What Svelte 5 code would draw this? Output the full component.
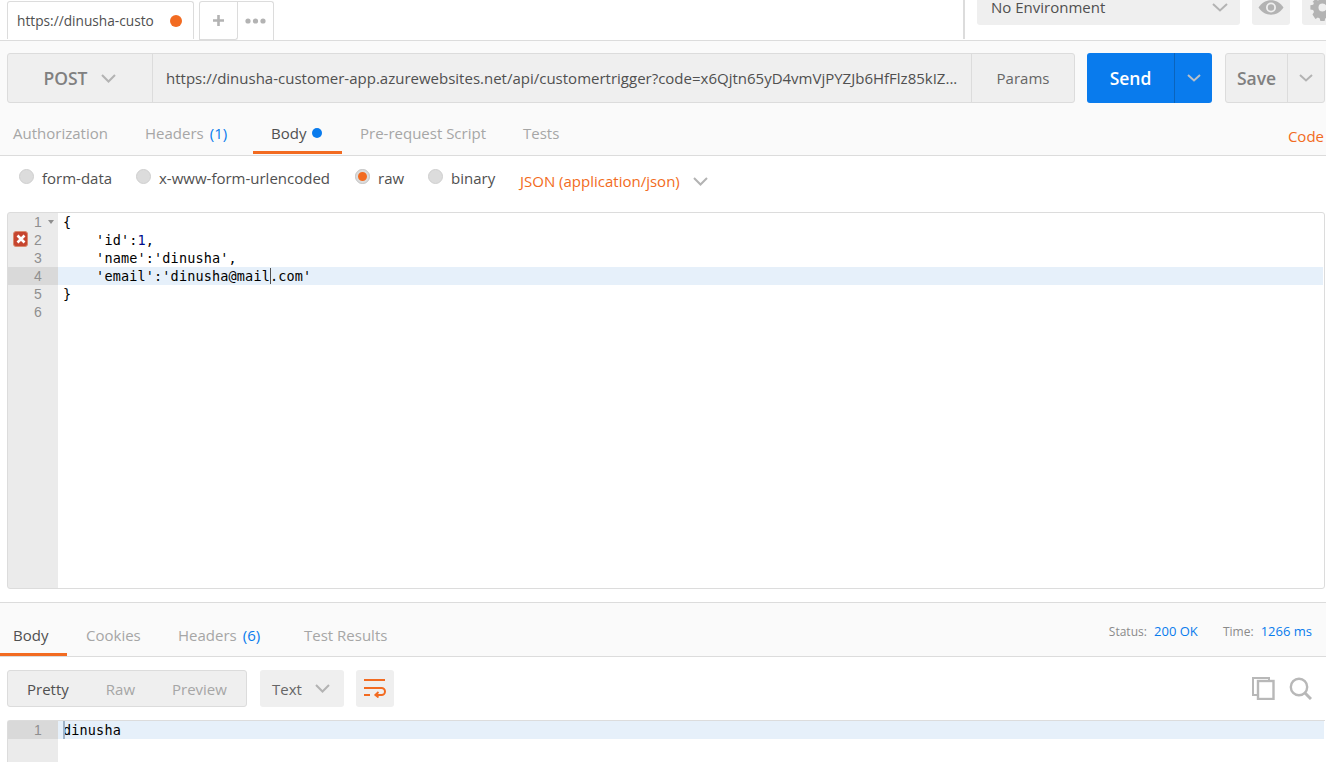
<script>
  const requestTabs = [
    { label: 'Authorization', width: 132 },
    { label: 'Headers', count: '(1)', width: 126 },
    { label: 'Body', active: true, dot: true, width: 89 },
    { label: 'Pre-request Script', width: 163 },
    { label: 'Tests', width: 64 }
  ];
  const bodyTypes = [
    { label: 'form-data', width: 117 },
    { label: 'x-www-form-urlencoded', width: 219 },
    { label: 'raw', checked: true, width: 73 },
    { label: 'binary', width: 92 }
  ];
  const code = [
    { text: '{', fold: true },
    { text: "    'id':", num: '1', tail: ',', error: true },
    { text: "    'name':'dinusha'," },
    { text: "    'email':'dinusha@mail", caret: true, tail: ".com'", active: true },
    { text: '}' },
    { text: '' }
  ];
  const responseTabs = [
    { label: 'Body', active: true, width: 67 },
    { label: 'Cookies', width: 92 },
    { label: 'Headers', count: '(6)', width: 126 },
    { label: 'Test Results', width: 110 }
  ];
</script>

<div class="page">
  <header class="topbar">
    <div class="tab">
      <span class="tab-title">https://dinusha-custo</span>
      <span class="unsaved"></span>
    </div>
    <div class="tab-actions">
      <button class="add">
        <svg width="11" height="11" viewBox="0 0 11 11"><path d="M4.2 0h2.6v4.2H11v2.6H6.8V11H4.2V6.8H0V4.2h4.2z" fill="#b3b3b3" /></svg>
      </button>
      <button class="more">
        <svg width="21" height="6" viewBox="0 0 21 6" fill="#b3b3b3"><circle cx="3" cy="3" r="2.6" /><circle cx="10.5" cy="3" r="2.6" /><circle cx="18" cy="3" r="2.6" /></svg>
      </button>
    </div>
    <div class="env-area">
      <div class="env-select">
        <span>No Environment</span>
        <svg class="chev" width="16" height="9" viewBox="0 0 16 9"><path d="M1 1l7 6.5L15 1" /></svg>
      </div>
      <div class="icon-btn eye">
        <svg width="26" height="15" viewBox="0 0 26 15"><path d="M0.5 7.5C4 2.5 8 0.3 13 0.3S22 2.500 25.500 7.500C22 12.500 18 14.700 13 14.700S4 12.500 0.500 7.500z" fill="#b3b3b3" /><circle cx="13" cy="7.500" r="5" fill="#efefef" /><circle cx="13" cy="7.500" r="3.200" fill="#b3b3b3" /></svg>
      </div>
      <div class="icon-btn gear">
        <svg width="24" height="24" viewBox="0 0 24 24"><path d="M9.500 0h5l.7 3.300 2.300 1 2.900-1.800 3.500 3.500-1.800 2.900 1 2.300 3.300.7v5l-3.300.7-1 2.300 1.800 2.900-3.500 3.500-2.900-1.800-2.300 1-.7 3.300h-5l-.7-3.300-2.300-1-2.900 1.800L.1 20.800l1.800-2.900-1-2.300L-2.400 14.900v-5l3.300-.7 1-2.300L.1 6l3.500-3.500 2.900 1.800 2.300-1z" fill="#b3b3b3" transform="translate(2.400 0) scale(.84)" /><circle cx="12.500" cy="10.500" r="4" fill="#efefef" /></svg>
      </div>
    </div>
  </header>

  <section class="request">
    <div class="url-row">
      <div class="url-group">
        <div class="method">
          <span>POST</span>
          <svg class="chev" width="15" height="9" viewBox="0 0 15 9"><path d="M1 1l6.500 6.500L14 1" /></svg>
        </div>
        <div class="url">https://dinusha-customer-app.azurewebsites.net/api/customertrigger?code=x6Qjtn65yD4vmVjPYZJb6HfFlz85kIZ...</div>
        <div class="params">Params</div>
      </div>
      <div class="send">
        <span class="send-label">Send</span>
        <span class="send-arrow">
          <svg width="14" height="8" viewBox="0 0 14 8"><path d="M1 1l6 5.500L13 1" /></svg>
        </span>
      </div>
      <div class="save">
        <span class="save-label">Save</span>
        <span class="save-arrow">
          <svg class="chev" width="14" height="8" viewBox="0 0 14 8"><path d="M1 1l6 5.500L13 1" /></svg>
        </span>
      </div>
    </div>
    <nav class="tabs req-tabs">
      {#each requestTabs as t}
        <div class="tabitem" class:active={t.active} style="width: {t.width}px">
          {t.label}
          {#if t.count}<span class="count">{t.count}</span>{/if}
          {#if t.dot}<span class="dot"></span>{/if}
        </div>
      {/each}
      <div class="code-link">Code</div>
    </nav>
  </section>

  <div class="body-types">
    {#each bodyTypes as b}
      <label class="radio" style="width: {b.width}px">
        <span class="circle" class:checked={b.checked}></span>
        <span class="radio-label">{b.label}</span>
      </label>
    {/each}
    <div class="json-select">
      <span>JSON (application/json)</span>
      <svg class="chev" width="15" height="9" viewBox="0 0 15 9"><path d="M1 1l6.500 6.500L14 1" /></svg>
    </div>
  </div>

  <div class="editor request-editor">
    <div class="lines">
      {#each code as line, i}
        <div class="line" class:current={line.active}>
          <div class="gutter">
            {#if line.error}
              <span class="err">
                <svg width="12" height="12" viewBox="0 0 12 12"><path d="M2.500 2.500l7 7M9.500 2.500l-7 7" stroke="#fff" stroke-width="2.600" /></svg>
              </span>
            {/if}
            <span class="num">{i + 1}</span>
            {#if line.fold}<span class="fold"></span>{/if}
          </div>
          <div class="content">{line.text}{#if line.num}<span class="number">{line.num}</span>{/if}{#if line.caret}<span class="caret"></span>{/if}{line.tail || ''}</div>
        </div>
      {/each}
    </div>
  </div>

  <section class="response">
    <nav class="tabs res-tabs">
      {#each responseTabs as t}
        <div class="tabitem" class:active={t.active} style="width: {t.width}px">
          {t.label}
          {#if t.count}<span class="count">{t.count}</span>{/if}
        </div>
      {/each}
      <div class="meta">
        <span class="meta-label">Status:</span> <span class="meta-val status">200 OK</span>
        <span class="meta-label">Time:</span> <span class="meta-val">1266 ms</span>
      </div>
    </nav>
  </section>

  <div class="res-controls">
    <div class="views">
      <span class="on">Pretty</span>
      <span>Raw</span>
      <span>Preview</span>
    </div>
    <div class="format">
      <span>Text</span>
      <svg class="chev" width="15" height="9" viewBox="0 0 15 9"><path d="M1 1l6.500 6.500L14 1" /></svg>
    </div>
    <div class="wrap-btn">
      <svg width="22" height="19" viewBox="0 0 22 19" fill="none" stroke="#f26b21" stroke-width="2"><path d="M0 1h21M0 9h17.500a3.500 3.500 0 0 1 0 7H11M0 16h6" /><path d="M14.500 13l-3.200 3 3.200 2.500" stroke-width="1.800" /></svg>
    </div>
    <div class="res-tools">
      <svg width="23" height="23" viewBox="0 0 23 23" fill="none" stroke="#b8b8b8" stroke-width="2"><path d="M17 3V1H1v17h4" /><rect x="6" y="4" width="15.500" height="18" stroke-width="2.400" /></svg>
      <svg width="23" height="23" viewBox="0 0 23 23" fill="none" stroke="#b8b8b8"><circle cx="10" cy="10" r="8.200" stroke-width="2.400" /><path d="M16 16l6 6" stroke-width="3" /></svg>
    </div>
  </div>

  <div class="editor response-editor">
    <div class="line current">
      <div class="gutter"><span class="num">1</span></div>
      <div class="content"><span class="caret res-caret"></span>dinusha</div>
    </div>
  </div>
</div>

<style>
  :global(body) {
    margin: 0;
    background: #fff;
    overflow: hidden;
  }
  .page {
    width: 1326px;
    height: 762px;
    overflow: hidden;
    font-family: "Open Sans", sans-serif;
    font-size: 15px;
    color: #505050;
  }
  svg {
    display: block;
    flex: none;
  }
  .chev {
    fill: none;
    stroke: #b3b3b3;
    stroke-width: 2;
  }

  /* top bar */
  .topbar {
    height: 40px;
    border-bottom: 1px solid #dcdcdc;
    display: flex;
    padding-left: 7px;
  }
  .tab {
    width: 187px;
    height: 38px;
    margin-top: 1px;
    box-sizing: border-box;
    border: 1px solid #dcdcdc;
    border-bottom: none;
    border-radius: 3px 3px 0 0;
    display: flex;
    align-items: center;
    padding: 0 11px 0 9px;
    justify-content: space-between;
    font-size: 13.700px;
  }
  .unsaved {
    width: 12px;
    height: 12px;
    border-radius: 50%;
    background: #f26b21;
  }
  .tab-actions {
    margin: 1px 0 0 5px;
    display: flex;
    height: 38px;
    border: 1px solid #dcdcdc;
    border-bottom: none;
    border-radius: 3px 3px 0 0;
  }
  .tab-actions button {
    background: none;
    border: none;
    padding: 0;
    display: flex;
    align-items: center;
    justify-content: center;
  }
  .add {
    width: 38px;
    border-right: 1px solid #dcdcdc !important;
    border-bottom: 1px solid #dcdcdc !important;
    border-radius: 0 0 3px 0;
  }
  .more {
    width: 35px;
  }
  .env-area {
    margin-left: auto;
    display: flex;
    align-items: flex-start;
    border-left: 2px solid #dcdcdc;
    height: 39px;
    padding-left: 12px;
    gap: 12px;
    margin-right: -14px;
  }
  .env-select {
    width: 263px;
    height: 25px;
    background: #efefef;
    border-radius: 0 0 3px 3px;
    box-sizing: border-box;
    padding: 0 12px 0 14px;
    display: flex;
    align-items: flex-start;
    justify-content: space-between;
    line-height: 14px;
  }
  .env-select svg {
    margin-top: 3px;
  }
  .icon-btn {
    width: 38px;
    height: 25px;
    background: #efefef;
    border-radius: 0 0 3px 3px;
    display: flex;
    justify-content: center;
    overflow: hidden;
  }
  .gear {
    justify-content: flex-start;
    padding-left: 8px;
    box-sizing: border-box;
  }
  .gear svg {
    margin-top: -3px;
  }

  /* request */
  .request {
    background: #fafafa;
    height: 102px;
    border-bottom: 1px solid #dcdcdc;
    padding-top: 12px;
  }
  .url-row {
    display: flex;
    margin-left: 7px;
    height: 50px;
  }
  .url-group {
    width: 1068px;
    display: flex;
    box-sizing: border-box;
    border: 1px solid #dcdcdc;
    border-radius: 3px;
    background: #efefef;
    align-items: center;
  }
  .method {
    width: 145px;
    height: 100%;
    box-sizing: border-box;
    display: flex;
    align-items: center;
    justify-content: center;
    gap: 13px;
    border-right: 1px solid #dcdcdc;
    font-size: 17.500px;
    font-weight: 600;
    color: #808080;
    padding-right: 1px;
  }
  .url {
    flex: 1;
    padding-left: 13px;
    white-space: nowrap;
    overflow: hidden;
  }
  .params {
    width: 102px;
    height: 100%;
    border-left: 1px solid #dcdcdc;
    display: flex;
    align-items: center;
    justify-content: center;
    color: #666;
  }
  .send {
    margin-left: 12px;
    width: 125px;
    background: #097bed;
    border-radius: 3px;
    display: flex;
    color: #fff;
    font-weight: 600;
    font-size: 17.500px;
  }
  .send-label {
    width: 87px;
    display: flex;
    align-items: center;
    justify-content: center;
  }
  .send-arrow {
    flex: 1;
    border-left: 1px solid #0a64bd;
    display: flex;
    align-items: center;
    justify-content: center;
  }
  .send-arrow path {
    fill: none;
    stroke: #b9c0c8;
    stroke-width: 2;
  }
  .save {
    margin-left: 13px;
    width: 100px;
    box-sizing: border-box;
    border: 1px solid #dcdcdc;
    background: #efefef;
    border-radius: 3px;
    display: flex;
    color: #808080;
    font-weight: 600;
    font-size: 17.500px;
  }
  .save-label {
    width: 61px;
    display: flex;
    align-items: center;
    justify-content: center;
  }
  .save-arrow {
    flex: 1;
    border-left: 1px solid #dcdcdc;
    display: flex;
    align-items: center;
    justify-content: center;
  }

  /* tab strips */
  .tabs {
    display: flex;
  }
  .tabitem {
    color: #a6a6a6;
    box-sizing: border-box;
    white-space: nowrap;
    border-bottom: 3px solid transparent;
    display: flex;
    align-items: center;
    gap: 6px;
    flex: none;
  }
  .tabitem.active {
    color: #505050;
    border-bottom-color: #f26b21;
  }
  .count {
    color: #097bed;
  }
  .dot {
    width: 10px;
    height: 10px;
    border-radius: 50%;
    background: #097bed;
  }
  .req-tabs {
    height: 52px;
    margin-left: -5px;
  }
  .req-tabs .tabitem {
    height: 51px;
    padding: 20px 0 9px 18px;
  }
  .code-link {
    margin-left: auto;
    color: #f26b21;
    margin-top: 19px;
    height: 28px;
    line-height: 28px;
    margin-right: 2px;
  }

  /* body type row */
  .body-types {
    height: 56px;
    display: flex;
    align-items: flex-start;
    padding-left: 19px;
    box-sizing: border-box;
  }
  .radio {
    display: flex;
    align-items: center;
    gap: 8px;
    margin-top: 12px;
    height: 20px;
    flex: none;
  }
  .circle {
    width: 15px;
    height: 15px;
    flex: none;
    box-sizing: border-box;
    border-radius: 50%;
    background: #dcdcdc;
    border: 1px solid #cfcfcf;
    margin-top: -4px;
  }
  .circle.checked {
    border: 3px solid #dcdcdc;
    background: #f26b21;
    outline: 1px solid #c8c8c8;
    outline-offset: -1px;
  }
  .json-select {
    display: flex;
    align-items: center;
    gap: 13px;
    color: #f26b21;
    margin-top: 15px;
    height: 20px;
  }

  /* editors */
  .editor {
    margin-left: 7px;
    width: 1318px;
    box-sizing: border-box;
    border: 1px solid #dcdcdc;
    font-family: "DejaVu Sans Mono", monospace;
    font-size: 13.500px;
    letter-spacing: 0.15px;
    color: #000;
    background: linear-gradient(to right, #ebebeb 50px, #fff 50px);
  }
  .request-editor {
    height: 377px;
    border-radius: 3px;
  }
  .line {
    display: flex;
    height: 18px;
    line-height: 18px;
    margin-right: 1px;
  }
  .gutter {
    width: 50px;
    flex: none;
    position: relative;
    box-sizing: border-box;
    text-align: right;
    padding-right: 16px;
    color: #8f8f8f;
    font-family: "Liberation Sans", sans-serif;
    font-size: 14px;
  }
  .current .gutter {
    background: #d9d9d9;
  }
  .current {
    background: #e6f0fa;
  }
  .content {
    padding-left: 5px;
    white-space: pre;
  }
  .number {
    color: #000a8c;
  }
  .caret {
    display: inline-block;
    width: 1px;
    height: 16px;
    background: #505050;
    vertical-align: -3px;
    margin-right: -1px;
  }
  .err {
    position: absolute;
    left: 5px;
    top: 0;
    width: 15px;
    height: 16px;
    background: #c6452f;
    border-radius: 3px;
    display: flex;
    align-items: center;
    justify-content: center;
    border: 1px solid #d98a6e;
    box-sizing: border-box;
  }
  .fold {
    position: absolute;
    right: 4px;
    top: 7px;
    border-left: 3.500px solid transparent;
    border-right: 3.500px solid transparent;
    border-top: 4px solid #8f8f8f;
  }

  /* response */
  .response {
    margin-top: 13px;
    border-top: 1px solid #dcdcdc;
    border-bottom: 1px solid #dcdcdc;
    background: #fafafa;
  }
  .res-tabs {
    height: 53px;
  }
  .res-tabs .tabitem {
    padding: 13px 0 0 19px;
    height: 53px;
  }
  .res-tabs .tabitem:first-child {
    padding-left: 13px;
  }
  .meta {
    margin-left: auto;
    padding-right: 14px;
    font-size: 12px;
    color: #8a8a8a;
    align-self: center;
    margin-top: 3px;
    white-space: nowrap;
  }
  .meta-val {
    color: #097bed;
    font-size: 13px;
  }
  .status {
    margin-right: 22px;
  }
  .meta-label {
    margin-right: 4px;
  }

  .res-controls {
    height: 37px;
    margin: 13px 0 13px 7px;
    display: flex;
    align-items: stretch;
  }
  .views {
    width: 240px;
    box-sizing: border-box;
    border: 1px solid #dcdcdc;
    border-radius: 3px;
    background: #efefef;
    display: flex;
    align-items: center;
    padding-left: 19px;
    gap: 37px;
    color: #a6a6a6;
  }
  .views .on {
    color: #505050;
  }
  .format {
    margin-left: 13px;
    width: 84px;
    background: #efefef;
    border-radius: 3px;
    display: flex;
    align-items: center;
    box-sizing: border-box;
    padding-left: 12px;
    gap: 13px;
    color: #666;
  }
  .wrap-btn {
    margin-left: 12px;
    width: 38px;
    background: #efefef;
    border-radius: 3px;
    display: flex;
    align-items: center;
    justify-content: center;
  }
  .res-tools {
    margin-left: auto;
    margin-right: 14px;
    display: flex;
    align-items: center;
    gap: 14px;
  }
  .response-editor {
    height: 60px;
    border-width: 1px 0 0 1px;
    width: 1318px;
    border-top-left-radius: 3px;
  }
  .response-editor .content {
    position: relative;
  }
  .res-caret {
    position: absolute;
    left: 5px;
    top: 0;
    width: 2px;
    height: 18px;
    background: #9fb3c8;
  }
</style>
